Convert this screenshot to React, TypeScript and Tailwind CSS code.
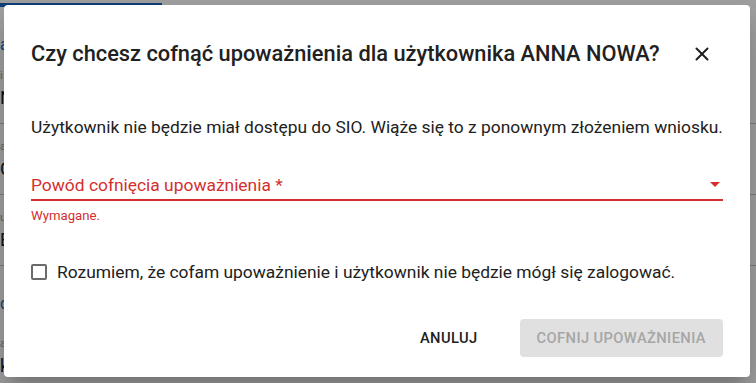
import { X } from "lucide-react";

const rows = [
  { label: "i", value: "N" },
  { label: "a", value: "C" },
  { label: "u", value: "B" },
];

function BackgroundPage() {
  return (
    <div className="h-full w-full bg-white">
      <div className="h-[4px] w-[162px] bg-[#1565c0] mt-[3px]" />
      <div className="pt-[30px] pl-0 text-[16px] leading-none text-[#1565c0]">a</div>
      {rows.map((r, i) => (
        <div key={i} className="flex h-[71px] flex-col justify-center border-b border-[#c4c4c4]">
          <span className="text-[11px] leading-none text-[#9e9e9e]">{r.label}</span>
          <span className="mt-2 text-[18px] leading-none text-[#222]">{r.value}</span>
        </div>
      ))}
      <div className="pt-[30px] text-[16px] leading-none text-[#1565c0]">c</div>
      <div className="pt-[26px] text-[11px] leading-none text-[#9e9e9e]">a</div>
      <div className="pt-[8px] text-[18px] leading-none text-[#222]">k</div>
    </div>
  );
}

function Checkbox() {
  return (
    <span className="flex h-[16px] w-[16px] shrink-0 rounded-[2px] border-2 border-[#6b6b6b]" />
  );
}

export default function App() {
  return (
    <div
      className="relative h-[383px] w-[756px] overflow-hidden"
      style={{ fontFamily: "Roboto, 'Liberation Sans', sans-serif" }}
    >
      <BackgroundPage />
      <div className="absolute inset-0 bg-[rgba(0,0,0,0.38)]" />

      <div className="absolute left-[4px] top-[5px] flex h-[372px] w-[746px] flex-col rounded-[4px] bg-white px-[27px] shadow-[0_11px_15px_-7px_rgba(0,0,0,0.2),0_24px_38px_3px_rgba(0,0,0,0.14)]">
        <div className="mt-[33px] flex h-[32px] items-center justify-between">
          <h2 className="whitespace-nowrap text-[21.8px] font-medium leading-[32px] text-[#212121]">
            Czy chcesz cofnąć upoważnienia dla użytkownika ANNA NOWA?
          </h2>
          <button className="mr-[1px] flex h-[40px] w-[40px] items-center justify-center text-[#212121]">
            <X size={22} strokeWidth={2.2} />
          </button>
        </div>

        <p className="mt-[45px] whitespace-nowrap text-[17.4px] leading-[24px] text-[#212121]">
          Użytkownik nie będzie miał dostępu do SIO. Wiąże się to z ponownym złożeniem wniosku.
        </p>

        <div className="relative mt-[35px] flex h-[27px] items-center border-b-2 border-[#d32f2f] pb-[4px]">
          <span className="text-[17.4px] leading-[24px] text-[#d32f2f]">Powód cofnięcia upoważnienia *</span>
          <svg className="absolute right-[-4px] top-[-2px]" width="24" height="24" viewBox="0 0 24 24">
            <path d="M7 10l5 5 5-5z" fill="#d32f2f" />
          </svg>
        </div>
        <span className="mt-[5px] text-[13.2px] leading-[20px] text-[#d32f2f]">Wymagane.</span>

        <label className="mt-[34px] flex items-center gap-[10px]">
          <Checkbox />
          <span className="whitespace-nowrap text-[17.4px] leading-[24px] text-[#212121]">
            Rozumiem, że cofam upoważnienie i użytkownik nie będzie mógł się zalogować.
          </span>
        </label>

        <div className="mt-auto mb-[20px] flex items-center justify-end gap-[34px]">
          <button className="px-[8px] py-[6px] text-[14.7px] font-medium uppercase leading-[24px] tracking-[0.4px] text-[#212121]">
            Anuluj
          </button>
          <button
            disabled
            className="h-[38px] rounded-[4px] bg-[#e0e0e0] px-[17px] text-[14.7px] font-medium uppercase leading-[24px] tracking-[0.4px] text-[#a6a6a6]"
          >
            Cofnij upoważnienia
          </button>
        </div>
      </div>
    </div>
  );
}
